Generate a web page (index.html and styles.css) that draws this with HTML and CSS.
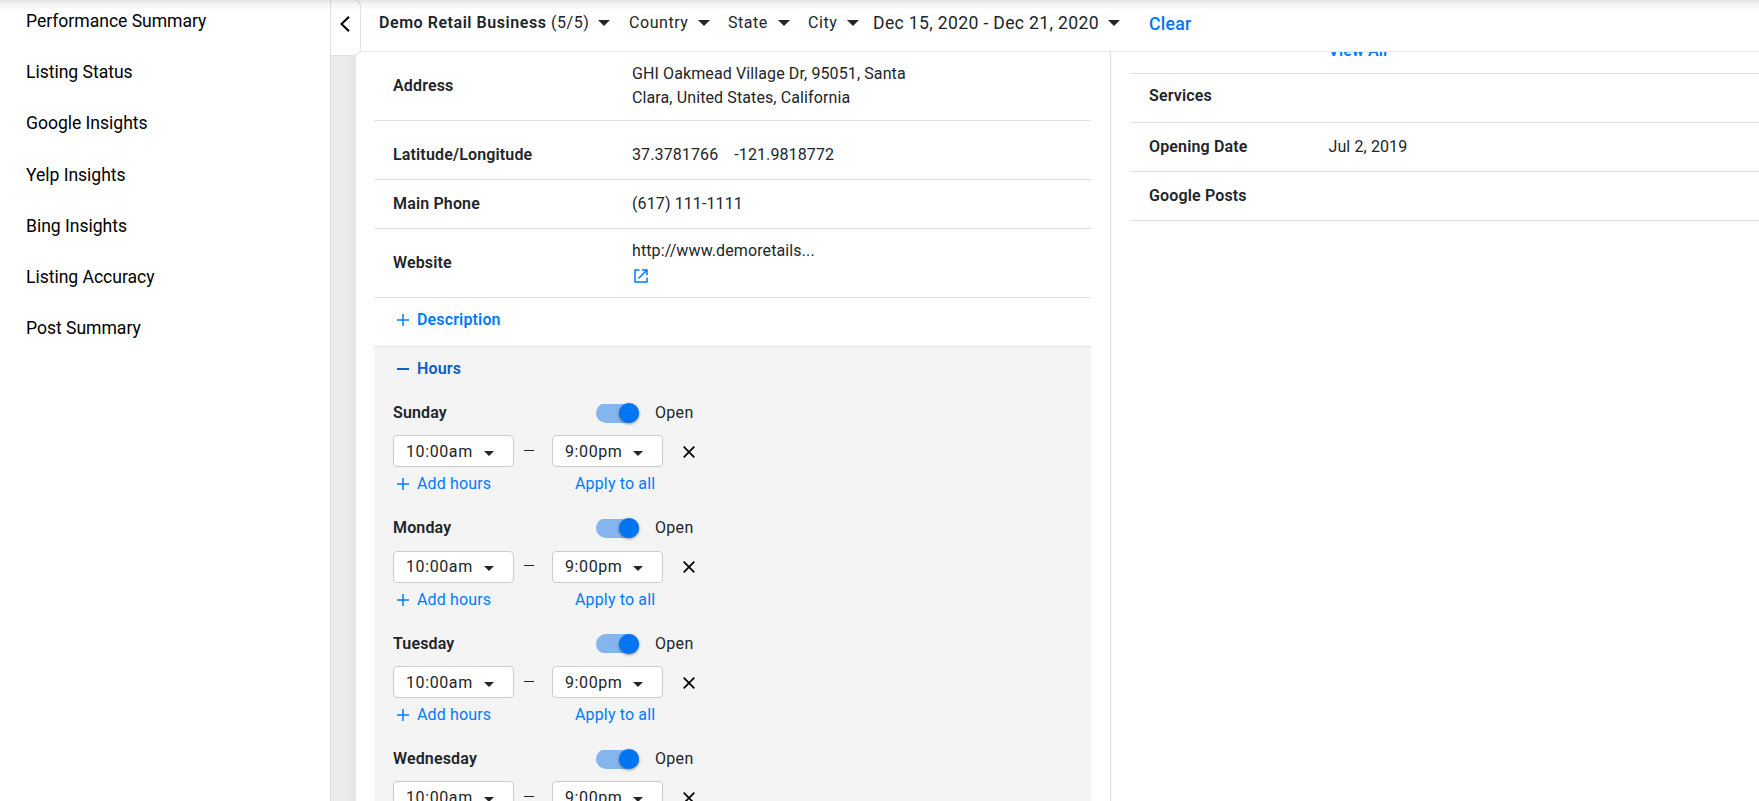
FILE: index.html
```html
<!DOCTYPE html>
<html lang="en">
<head>
<meta charset="utf-8">
<title>Demo Retail Business</title>
<link rel="stylesheet" href="styles.css">
</head>
<body>
<div class="app">
  <nav class="sidebar">
    <a>Performance Summary</a>
    <a>Listing Status</a>
    <a>Google Insights</a>
    <a>Yelp Insights</a>
    <a>Bing Insights</a>
    <a>Listing Accuracy</a>
    <a>Post Summary</a>
  </nav>
  <div class="gutter"></div>
  <main class="main">
    <header class="topbar">
      <span class="filter business"><span><b>Demo Retail Business</b> (5/5)</span><i class="caret"></i></span>
      <span class="filter country"><span>Country</span><i class="caret"></i></span>
      <span class="filter state"><span>State</span><i class="caret"></i></span>
      <span class="filter city"><span>City</span><i class="caret"></i></span>
      <span class="filter dates"><span>Dec 15, 2020 - Dec 21, 2020</span><i class="caret"></i></span>
      <a class="clear">Clear</a>
    </header>
    <div class="content">
      <section class="details">
        <div class="row address"><b>Address</b><span>GHI Oakmead Village Dr, 95051, Santa<br>Clara, United States, California</span></div>
        <div class="row latlng"><b>Latitude/Longitude</b><span class="pair"><span>37.3781766</span><span>-121.9818772</span></span></div>
        <div class="row"><b>Main Phone</b><span>(617) 111-1111</span></div>
        <div class="row website"><b>Website</b><span class="site">http://www.demoretails...
          <svg class="launch" viewBox="0 0 14 14"><path d="M5.5 1H1v12h12V8.5M8 1h5v5M13 1L4.5 9.5"/></svg></span></div>
        <div class="row toggle-row"><svg class="plus" viewBox="0 0 12 12"><path d="M6 0v12M0 6h12"/></svg><b>Description</b></div>
        <div class="hours">
          <div class="hours-head"><svg class="plus" viewBox="0 0 12 12"><path d="M0 6h12"/></svg><b>Hours</b></div>
          <div id="days"></div>
        </div>
      </section>
      <section class="extra">
        <div class="row view"><b></b><a>View All</a></div>
        <div class="row services"><b>Services</b></div>
        <div class="row"><b>Opening Date</b><span>Jul 2, 2019</span></div>
        <div class="row"><b>Google Posts</b></div>
      </section>
    </div>
  </main>
  <button class="collapse" aria-label="Collapse"><svg viewBox="0 0 10 16"><path d="M9 .8L1.5 8L9 15.2"/></svg></button>
  <div class="top-shadow"></div>
</div>
<script src="days.js"></script>
</body>
</html>
```
FILE: styles.css
```css
* { box-sizing: border-box; }
body {
  margin: 0;
  font: 16px/24px Roboto, sans-serif;
  letter-spacing: .11px;
  color: #212529;
  background: #fff;
}
b { font-weight: 600; letter-spacing: .15px; }
i { font-style: normal; }
svg { display: block; fill: none; }
.app { position: relative; display: flex; height: 801px; overflow: hidden; }

.sidebar {
  width: 331px;
  flex: none;
  padding: 0 26px;
  border-right: 1px solid #dee2e6;
  display: flex;
  flex-direction: column;
  gap: 27.2px;
  padding-top: 9px;
}
.sidebar a { font-size: 17.6px; letter-spacing: -.04px; color: #000; }
.gutter { width: 25px; flex: none; background: linear-gradient(90deg, #ececec 0 12px, #e6e6e6); }

.main { flex: 1; min-width: 0; display: flex; flex-direction: column; }
.topbar {
  height: 52px;
  flex: none;
  border-bottom: 1px solid #e9eaec;
  display: flex;
  align-items: center;
  padding: 0 0 6px 23px;
  letter-spacing: .55px;
  white-space: nowrap;
}
.topbar b { letter-spacing: inherit; }
.filter { display: flex; align-items: center; justify-content: space-between; }
.business { width: 231px; margin-right: 19px; }
.country { width: 81px; margin-right: 18px; }
.state { width: 62px; margin-right: 18px; }
.city { width: 51px; margin-right: 14px; }
.dates { width: 247px; margin-right: 29px; font-size: 17.6px; letter-spacing: .34px; }
.caret { border: 6px solid transparent; border-top: 6.5px solid #212529; border-bottom: 0; }
.clear { font-size: 17.6px; font-weight: 500; letter-spacing: .3px; color: #0075f5; margin-top: 2px; }

.content { flex: 1; display: flex; min-height: 0; overflow: hidden; }
.details { width: 755px; flex: none; padding: 0 19px 0 18px; border-right: 1px solid #dcdee4; }
.row {
  height: 49px;
  padding-left: 19px;
  border-bottom: 1px solid #dee2e6;
  display: flex;
  align-items: center;
}
.row > b { width: 239px; flex: none; }
.address { height: 69px; }
.latlng { height: 59px; padding-top: 9px; }
.pair { display: flex; gap: 16px; }
.website { height: 69px; }
.launch { width: 14px; height: 14px; margin: 6px 0 5px 2px; stroke: #007bff; stroke-width: 1.5; }
.toggle-row, .hours-head { display: flex; align-items: center; padding: 0 0 5px 23px; gap: 8px; color: #007bff; }
.toggle-row > b { width: auto; }
.plus { width: 12px; height: 12px; flex: none; stroke: #007bff; stroke-width: 1.5; }
.hours { background: #f4f4f4; height: 480px; }
.hours-head { height: 49px; color: #0a5dc8; }
.hours-head .plus { stroke: #0a65c8; stroke-width: 2; }

.day { height: 115.4px; padding: 4px 0 0 19px; }
.day-head { display: flex; align-items: center; height: 26px; }
.day-head b { width: 203px; }
.day-head span { letter-spacing: .3px; }
.switch { width: 43px; height: 20px; display: flex; align-items: center; justify-content: flex-end; margin-right: 16px;
  background: linear-gradient(#84b5ec, #84b5ec) 0 50% / 43px 19px no-repeat; border-radius: 10px; }
.knob { width: 20px; height: 20px; border-radius: 50%; background: #0075f2; box-shadow: 0 1px 3px rgba(0,0,0,.45); }
.times { display: flex; align-items: center; margin-top: 9.3px; height: 32px; letter-spacing: .6px; }
.select {
  height: 32px;
  width: 121px;
  background: #fff;
  border: 1px solid #ccc;
  border-radius: 4px;
  display: flex;
  align-items: center;
  justify-content: space-between;
  padding: 1px 19px 0 12px;
}
.select .caret { border-width: 5px 5px 0; margin-top: 3px; }
.select.to { width: 111px; }
.dash { width: 10px; height: 1px; background: #212529; margin: 0 18px 2px 10px; }
.remove { width: 12px; height: 12px; margin-left: 20px; margin-top: 1px; stroke: #000; stroke-width: 1.7; }
.links { display: flex; align-items: center; gap: 8px; padding-left: 4px; margin-top: 5px; color: #007bff; letter-spacing: .15px; }
.links span { width: 150px; }

.extra { flex: 1; padding-left: 19px; }
.extra .row > b { width: 179.5px; }
.extra .row > a { color: #007bff; font-weight: 600; }
.extra .services { padding-bottom: 4px; }
.extra .view { height: 22px; align-items: flex-start; }
.view a { margin-top: -13px; }

.collapse {
  position: absolute;
  left: 331px;
  top: -1px;
  width: 30px;
  height: 57px;
  padding: 0 0 8px 9px;
  background: #fff;
  border: 1px solid #dee2e6;
  border-left: 0;
  border-radius: 0 8px 8px 0;
  display: flex;
  align-items: center;
}
.collapse svg { width: 10px; height: 16px; stroke: #000; stroke-width: 2; }
.top-shadow {
  position: absolute;
  inset: 0 0 auto;
  height: 10px;
  background: linear-gradient(rgba(0,0,0,.11), rgba(0,0,0,.05) 35%, transparent);
}
```
FILE: days.js
```js
const days = ['Sunday', 'Monday', 'Tuesday', 'Wednesday'];
document.getElementById('days').innerHTML = days.map(day => `
  <div class="day">
    <div class="day-head"><b>${day}</b><div class="switch"><i class="knob"></i></div><span>Open</span></div>
    <div class="times">
      <div class="select">10:00am<i class="caret"></i></div>
      <i class="dash"></i>
      <div class="select to">9:00pm<i class="caret"></i></div>
      <svg class="remove" viewBox="0 0 12 12"><path d="M.7 .7L11.3 11.3M11.3 .7L.7 11.3"/></svg>
    </div>
    <div class="links"><svg class="plus" viewBox="0 0 12 12"><path d="M6 0v12M0 6h12"/></svg><span>Add hours</span><a>Apply to all</a></div>
  </div>`).join('');
```
